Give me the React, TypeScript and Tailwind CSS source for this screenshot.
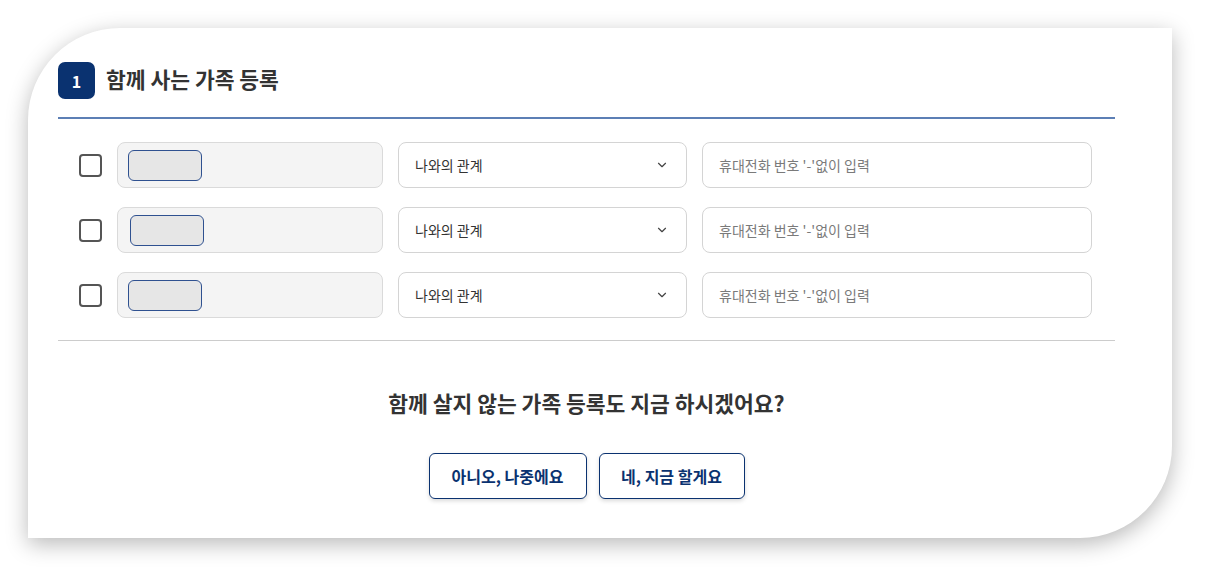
import { ChevronDown } from "lucide-react";

const rows = [
  { chipShift: "ml-[10px]" },
  { chipShift: "ml-[12px]" },
  { chipShift: "ml-[10px]" },
];

function FamilyRow({ chipShift }: { chipShift: string }) {
  return (
    <div className="flex items-center h-[46px]">
      {/* checkbox */}
      <div className="w-[23px] h-[23px] rounded-[4px] border-2 border-[#555] bg-white shrink-0" />

      {/* name (read only) */}
      <div className="ml-[15px] w-[266px] h-full rounded-[8px] border border-[#dadada] bg-[#f4f4f4] flex items-center">
        <div
          className={`${chipShift} w-[74px] h-[31px] rounded-[6px] border border-[#2f5190] bg-[#e6e6e6]`}
        />
      </div>

      {/* relation select */}
      <div className="ml-[15px] w-[289px] h-full rounded-[8px] border border-[#d4d4d4] bg-white flex items-center justify-between pl-[16px] pr-[17px]">
        <span className="text-[14px] text-[#333]">나와의 관계</span>
        <ChevronDown className="w-[14px] h-[14px] text-[#444]" strokeWidth={2} />
      </div>

      {/* phone */}
      <div className="ml-[15px] w-[390px] h-full rounded-[8px] border border-[#d4d4d4] bg-white flex items-center pl-[16px]">
        <span className="text-[14px] text-[#7a7a7a]">휴대전화 번호 '-'없이 입력</span>
      </div>
    </div>
  );
}

export default function App() {
  return (
    <div
      className="w-[1213px] h-[580px] bg-white pt-[28px] pl-[28px]"
      style={{ fontFamily: '"Noto Sans CJK KR", "Noto Sans", sans-serif' }}
    >
      <div className="w-[1144px] h-[510px] bg-white rounded-tl-[92px] rounded-br-[92px] shadow-[0_6px_22px_rgba(0,0,0,0.28)] pl-[30px] pr-[57px] pt-[34px]">
        {/* Header */}
        <div className="flex items-center gap-[11px] h-[37px]">
          <div className="w-[37px] h-[37px] rounded-[7px] bg-[#0a3270] text-white flex items-center justify-center text-[16px] font-bold">
            1
          </div>
          <h1 className="text-[21.5px] leading-[30px] -mt-[3px] font-bold text-[#333]">함께 사는 가족 등록</h1>
        </div>

        <div className="mt-[18px] h-[2px] bg-[#5c7fb5]" />

        {/* Rows */}
        <div className="mt-[23px] pl-[21px] flex flex-col gap-[19px]">
          {rows.map((r, i) => (
            <FamilyRow key={i} chipShift={r.chipShift} />
          ))}
        </div>

        <div className="mt-[22px] h-px bg-[#cccccc]" />

        {/* Question */}
        <p className="mt-[46px] text-center text-[21.5px] font-bold text-[#333]">
          함께 살지 않는 가족 등록도 지금 하시겠어요?
        </p>

        <div className="mt-[34px] flex justify-center gap-[12px]">
          <button className="w-[158px] h-[46px] rounded-[6px] border-[1.5px] border-[#0a3270] bg-white text-[#0a3270] text-[16px] font-bold shadow-[0_2px_4px_rgba(0,0,0,0.15)]">
            아니오, 나중에요
          </button>
          <button className="w-[146px] h-[46px] rounded-[6px] border-[1.5px] border-[#0a3270] bg-white text-[#0a3270] text-[16px] font-bold shadow-[0_2px_4px_rgba(0,0,0,0.15)]">
            네, 지금 할게요
          </button>
        </div>
      </div>
    </div>
  );
}
